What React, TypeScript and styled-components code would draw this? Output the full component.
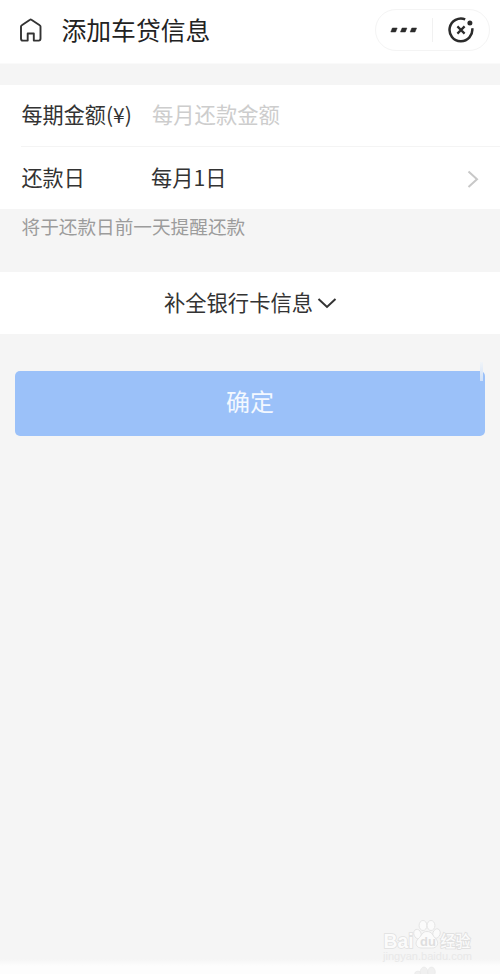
import React from 'react';
import styled, { createGlobalStyle } from 'styled-components';

const GlobalStyle = createGlobalStyle`
  *, *::before, *::after { box-sizing: border-box; }
  body { margin: 0; background: #f5f5f5; }
  body, button, input { font-family: "Noto Sans CJK SC", "Noto Sans", sans-serif; }
`;

const Screen = styled.div`
  display: flex;
  flex-direction: column;
  height: 974px;
  width: 500px;
  overflow: hidden;
  background: #f5f5f5;
  color: #333;
`;

const Header = styled.header`
  display: flex;
  align-items: center;
  height: 64px;
  padding: 0 10.5px 4px 18px;
  background: #fff;
  border-bottom: 1px solid #fafafa;
`;

const Title = styled.h1`
  flex: 1;
  margin: 0 0 0 17.5px;
  padding-bottom: 2px;
  font-size: 24.8px;
  line-height: 36px;
  font-weight: 400;
  color: #222;
`;

const Capsule = styled.div`
  display: flex;
  align-items: center;
  width: 115px;
  height: 42px;
  border: 1px solid #f4f4f4;
  border-radius: 21px;
`;

const CapsuleButton = styled.button`
  display: flex;
  flex: 1;
  align-items: center;
  justify-content: center;
  height: 100%;
  padding: 0;
  border: 0;
  background: none;
`;

const CapsuleDivider = styled.span`
  width: 1px;
  height: 24px;
  background: #f1f1f1;
`;

const Form = styled.section`
  margin-top: 21px;
  background: #fff;
`;

const Row = styled.div<{ $height: number; $lift: number; $divided?: boolean }>`
  display: flex;
  align-items: center;
  height: ${({ $height }) => $height}px;
  margin-left: 21px;
  padding-right: 21px;
  padding-bottom: ${({ $lift }) => $lift}px;
  font-size: 21.2px;
  line-height: 30px;
  border-bottom: ${({ $divided }) => ($divided ? '1px solid #f4f4f4' : '0')};

  svg { margin-top: 4px; }
`;

const Label = styled.label`
  width: 130px;
  padding-left: .5px;
  white-space: nowrap;
  font-size: 21.1px;
`;

const AmountInput = styled.input`
  flex: 1;
  min-width: 0;
  height: 32px;
  padding: 0;
  margin-left: 1px;
  border: 0;
  outline: 0;
  background: none;
  font-size: 21.3px;
  color: #333;
  &::placeholder { color: #cdcdcd; opacity: 1; }
`;

const Value = styled.span`
  flex: 1;
`;

const Hint = styled.p`
  height: 63px;
  margin: 0;
  padding: 3px 21.5px 0;
  font-size: 18.65px;
  line-height: 28px;
  color: #9c9c9c;
`;

const Expand = styled.button`
  display: flex;
  align-items: center;
  justify-content: center;
  gap: 4px;
  height: 62px;
  padding: 0 0 3px 1px;
  border: 0;
  background: #fff;
  color: #333;
  font-size: 21.3px;
  line-height: 30px;

  svg { margin-top: 3px; }
`;

const Submit = styled.button`
  position: relative;
  height: 65px;
  margin: 37px 15px 0;
  padding: 0 0 6px;
  border: 0;
  border-radius: 5px;
  background: #9bc1f9;
  color: #f3f8ff;
  font-size: 24px;
  line-height: 36px;

  &::after {
    content: "";
    position: absolute;
    top: -9px;
    right: 2px;
    width: 3px;
    height: 19px;
    background: linear-gradient(#f0f4f8, #cfe0f8);
  }
`;

const Footer = styled.footer`
  margin-top: auto;
  height: 60px;
  padding-left: 380px;
  background: linear-gradient(#f5f5f5 0 45px, #fdfdfd 52px);
`;

const Watermark = styled.svg`
  display: block;
  overflow: hidden;
  font-family: "Liberation Sans", "Noto Sans CJK SC", sans-serif;
`;

const HomeIcon = () => (
  <svg width="26" height="28" viewBox="0 0 26 28" fill="none" stroke="#333" strokeWidth="1.9" strokeLinejoin="round">
    <path d="M3 10.5Q3 9.7 3.8 9.2L12 3.7Q12.7 3.2 13.4 3.7L21.7 9.2Q22.5 9.7 22.5 10.5V22.5Q22.5 24.6 20.8 24.6H15.8V17.5H9.7V24.6H4.7Q3 24.6 3 22.5Z" />
  </svg>
);

const MoreIcon = () => (
  <svg width="28" height="8" viewBox="0 0 28 8" fill="#2b2b2b">
    <path d="M2.4 2H7.2L5.6 6H.8ZM12.1 2H16.9L15.3 6H10.5ZM21.8 2H26.6L25 6H20.2Z" stroke="#2b2b2b" strokeWidth=".5" strokeLinejoin="round" />
  </svg>
);

const CloseIcon = () => (
  <svg width="28" height="28" viewBox="0 0 28 28" fill="none" stroke="#2b2b2b">
    <path d="M18.2 3.3A11.4 11.4 0 1 0 25.2 12.2" strokeWidth="2.5" />
    <path d="M10.4 10.4L17.6 17.6M17.6 10.4L10.4 17.6" strokeWidth="2.2" />
    <circle cx="22.9" cy="7.1" r="2.5" fill="#2b2b2b" stroke="none" />
  </svg>
);

const ChevronRight = () => (
  <svg width="12" height="18" viewBox="0 0 12 18" fill="none" stroke="#c8c8c8" strokeWidth="2">
    <path d="M1.5 1.5L10 9.2L1.5 17" />
  </svg>
);

const ChevronDown = () => (
  <svg width="20" height="12" viewBox="0 0 20 12" fill="none" stroke="#333" strokeWidth="2">
    <path d="M1.5 2L10 10L18.5 2" />
  </svg>
);

const BrandMark = () => (
  <Watermark width="120" height="60" viewBox="0 0 120 60" fill="#fbfbfb" stroke="#e0e0e0" strokeWidth=".8">
    <text x="3.5" y="33.5" fontSize="21" fontWeight="700" strokeWidth="1.6" paintOrder="stroke" textLength="30" lengthAdjust="spacingAndGlyphs">Bai</text>
    <ellipse cx="37.5" cy="20" rx="3.6" ry="4.8" transform="rotate(-18 37.5 20)" />
    <ellipse cx="43" cy="17" rx="3.9" ry="5" transform="translate(0 -5.5)" />
    <ellipse cx="51" cy="11.5" rx="3.9" ry="5" />
    <ellipse cx="56.5" cy="19.5" rx="3.6" ry="4.8" transform="rotate(18 56.5 19.5)" />
    <path d="M47 17.5C52 17.5 52.5 21.5 55.5 24.5C60 29 57 34.5 51.5 34H42C36 34.5 34 28.5 38.5 24.5C42 21.5 42 17.5 47 17.5Z" />
    <text x="40" y="31.5" fontSize="13" fontWeight="700" fill="#dedede" stroke="none">du</text>
    <text x="60.5" y="33" fontSize="16" fontWeight="500" strokeWidth="1.8" paintOrder="stroke" textLength="30" lengthAdjust="spacingAndGlyphs">经验</text>
    <text x="3" y="46" fontSize="10" fill="#e8e8e8" stroke="none" textLength="89" lengthAdjust="spacingAndGlyphs">jingyan.baidu.com</text>
    <g fill="#f0f0f0" stroke="#e4e4e4" strokeWidth=".5">
      <ellipse cx="38" cy="61" rx="3.6" ry="4" />
      <ellipse cx="44" cy="58" rx="3.8" ry="5" />
      <ellipse cx="51.5" cy="58" rx="3.8" ry="5" />
    </g>
  </Watermark>
);

export default function App() {
  return (
    <>
      <GlobalStyle />
      <Screen>
        <Header>
          <HomeIcon />
          <Title>添加车贷信息</Title>
          <Capsule>
            <CapsuleButton aria-label="更多"><MoreIcon /></CapsuleButton>
            <CapsuleDivider />
            <CapsuleButton aria-label="关闭"><CloseIcon /></CapsuleButton>
          </Capsule>
        </Header>
        <Form>
          <Row $height={62} $lift={4} $divided>
            <Label htmlFor="amount">每期金额(¥)</Label>
            <AmountInput id="amount" placeholder="每月还款金额" />
          </Row>
          <Row $height={62} $lift={3}>
            <Label as="span">还款日</Label>
            <Value>每月1日</Value>
            <ChevronRight />
          </Row>
        </Form>
        <Hint>将于还款日前一天提醒还款</Hint>
        <Expand>
          补全银行卡信息
          <ChevronDown />
        </Expand>
        <Submit>确定</Submit>
        <Footer>
          <BrandMark />
        </Footer>
      </Screen>
    </>
  );
}
